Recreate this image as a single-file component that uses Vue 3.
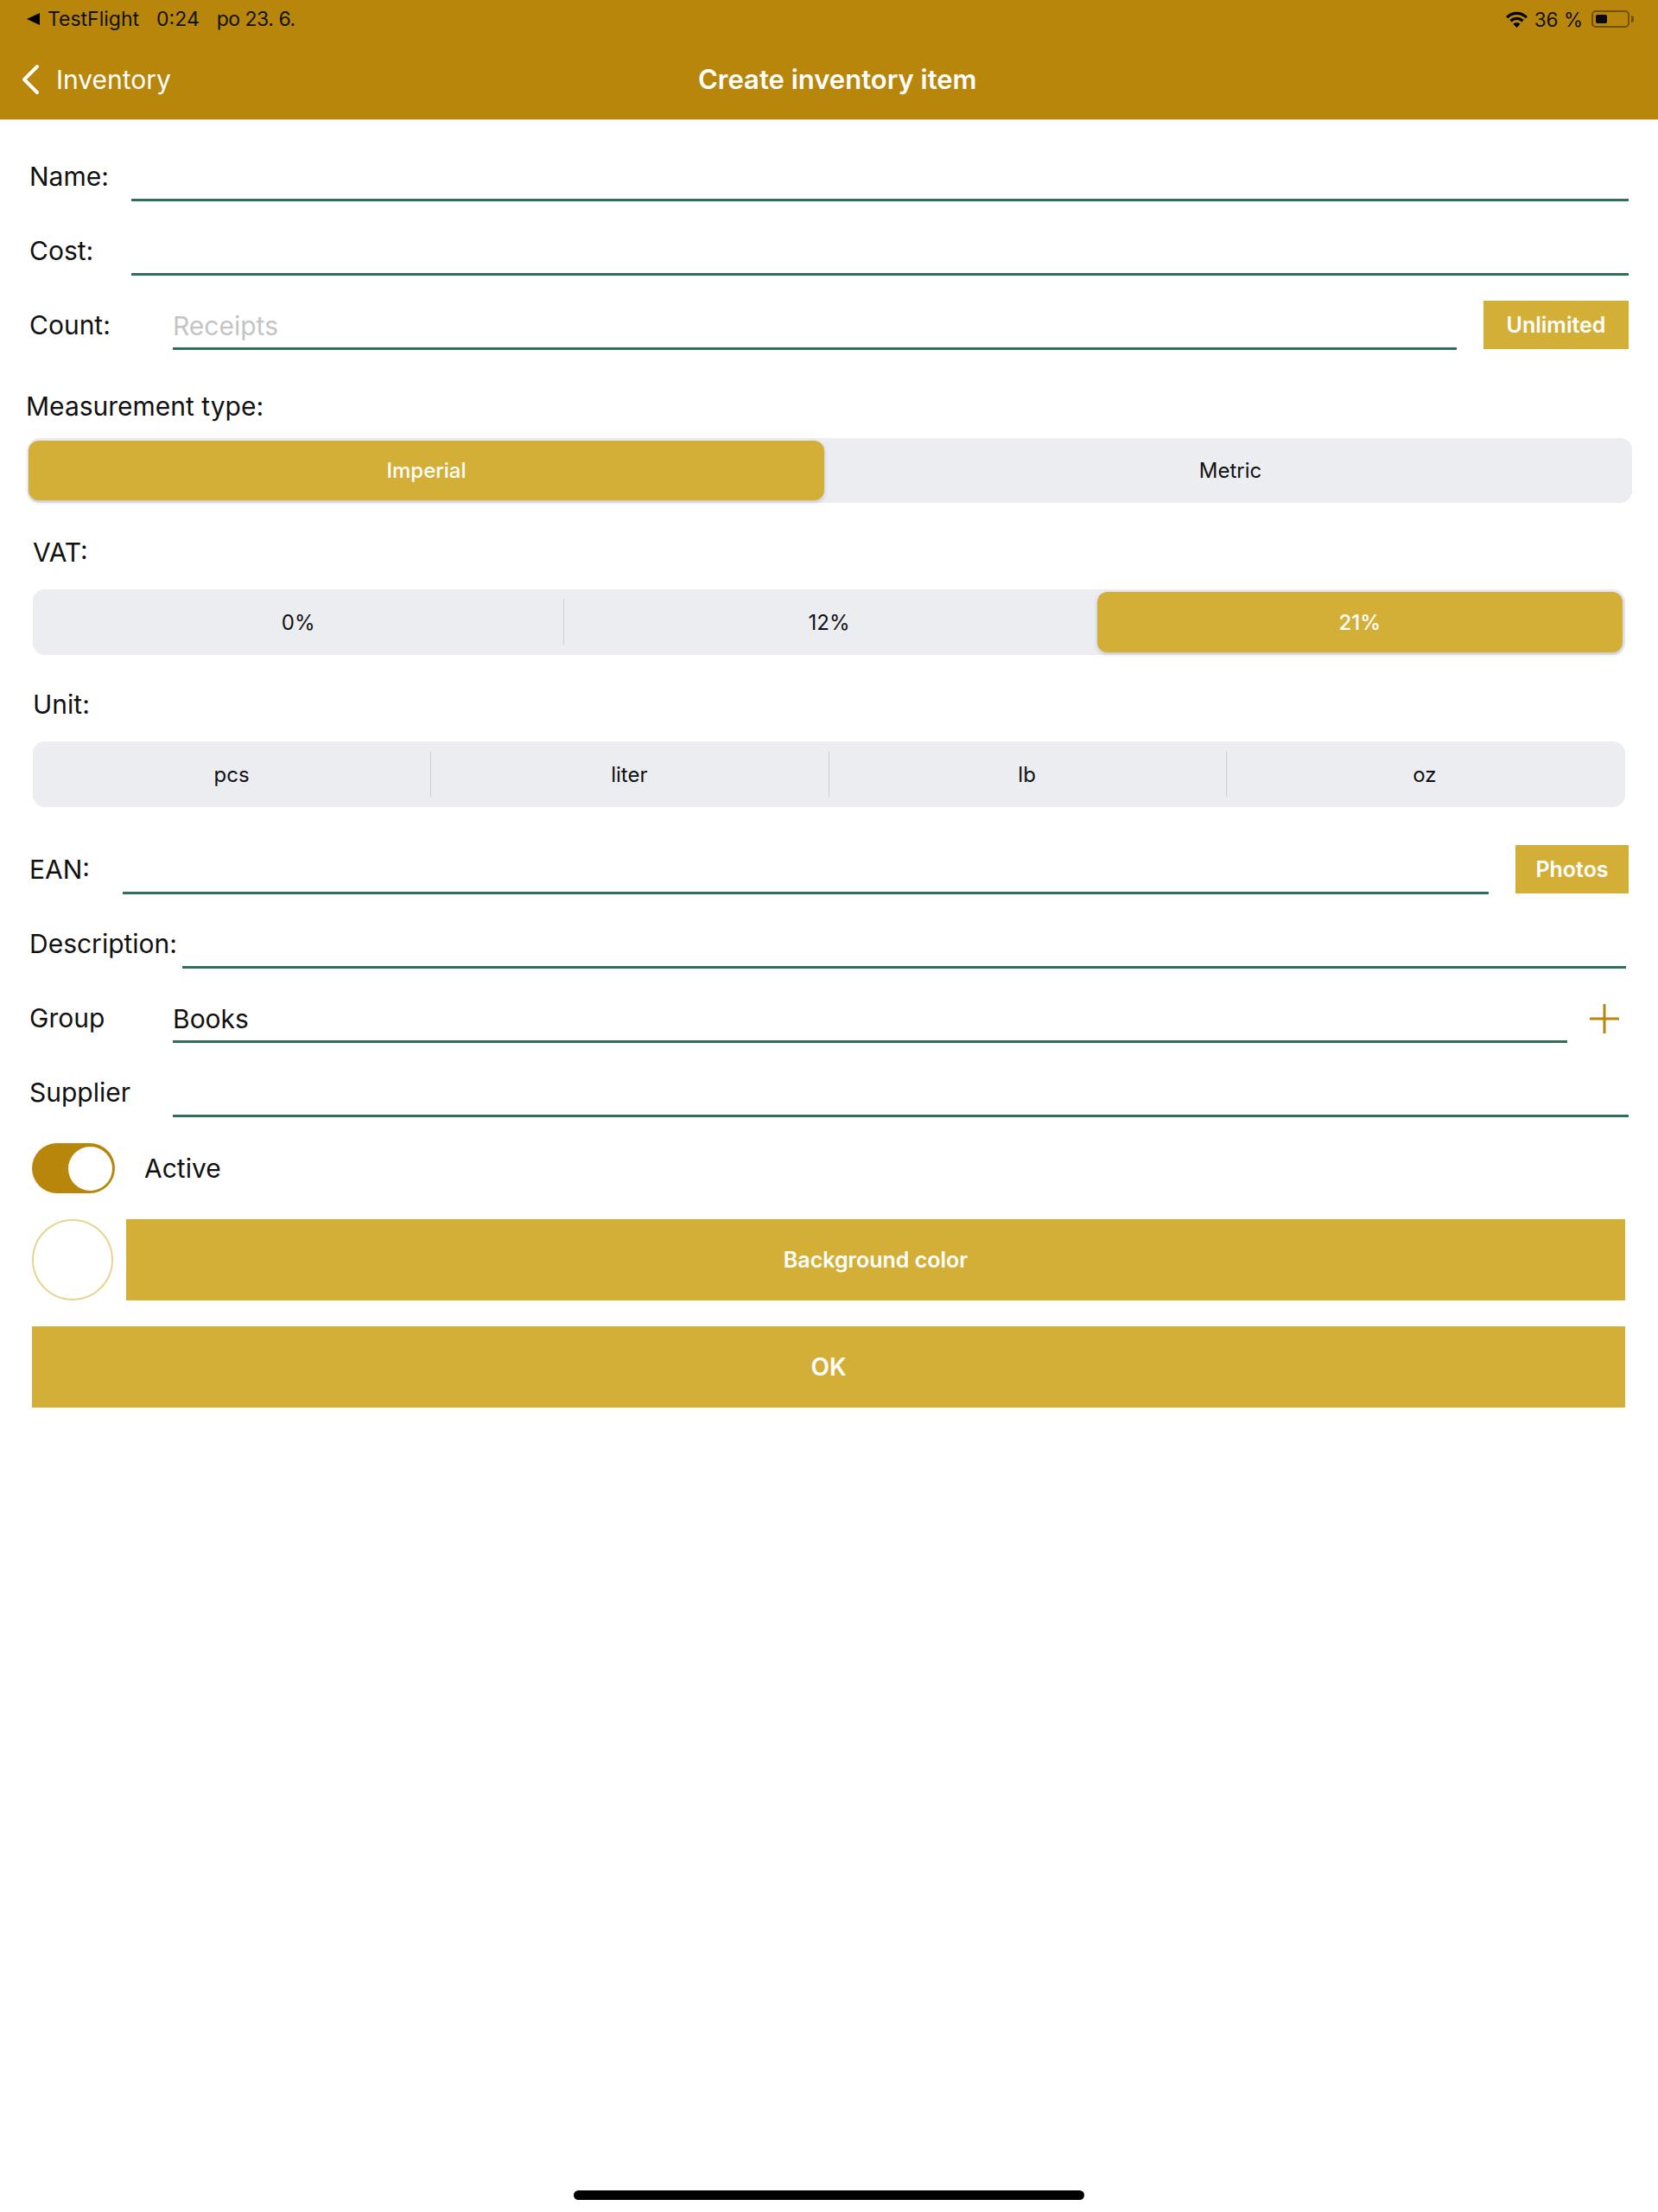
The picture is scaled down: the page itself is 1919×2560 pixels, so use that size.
<template>
  <div class="page">
    <!-- Status + nav bar -->
    <header class="top-bar">
      <div class="status-bar">
        <div class="status-left">
          <svg class="back-arrow" viewBox="0 0 15 14" width="15" height="14"><path d="M0 7 15 0v14z" fill="#000" /></svg>
          <span class="status-app">TestFlight</span>
          <span class="status-time">0:24</span>
          <span class="status-date">po 23. 6.</span>
        </div>
        <div class="status-right">
          <svg class="wifi" viewBox="0 0 26 20" width="25" height="19">
            <path d="M1 7.5C8 .8 18 .8 25 7.5" fill="none" stroke="#000" stroke-width="3.4" />
            <path d="M5.6 11.8c4.4-4 10.4-4 14.8 0" fill="none" stroke="#000" stroke-width="3.4" />
            <path d="M13 20l-4.2-4.6c2.4-2 6-2 8.4 0z" fill="#000" />
          </svg>
          <span class="battery-text">36 %</span>
          <div class="battery"><div class="battery-fill"></div></div>
          <div class="battery-tip"></div>
        </div>
      </div>
      <nav class="nav-bar">
        <div class="nav-back">
          <svg viewBox="0 0 22 36" width="22" height="36"><path d="M19 3 4 18l15 15" fill="none" stroke="#fff" stroke-width="4" stroke-linecap="round" stroke-linejoin="round" /></svg>
          <span>Inventory</span>
        </div>
        <h1 class="nav-title">Create inventory item</h1>
      </nav>
    </header>

    <main class="form">
      <div class="row row-first">
        <label class="row-label label-name">Name:</label>
        <input v-model="form.name" class="row-input" />
      </div>
      <div class="row">
        <label class="row-label label-name">Cost:</label>
        <input v-model="form.cost" class="row-input" />
      </div>
      <div class="row">
        <label class="row-label label-wide">Count:</label>
        <input v-model="form.count" class="row-input" placeholder="Receipts" />
        <button class="small-btn unlimited-btn">Unlimited</button>
      </div>

      <div class="section-label measure-label">Measurement type:</div>
      <div class="segment measure-segment">
        <div v-for="(item, i) in measurementTypes" :key="item" class="segment-item" :class="{ active: form.measurement === i }">
          <span>{{ item }}</span>
        </div>
      </div>

      <div class="section-label">VAT:</div>
      <div class="segment">
        <div
          v-for="(item, i) in vatRates"
          :key="item"
          class="segment-item"
          :class="{ active: form.vat === i, divided: i > 0 && form.vat !== i && form.vat !== i - 1 }"
        >
          <span>{{ item }}</span>
        </div>
      </div>

      <div class="section-label">Unit:</div>
      <div class="segment unit-segment">
        <div v-for="(item, i) in units" :key="item" class="segment-item" :class="{ divided: i > 0 }">
          <span>{{ item }}</span>
        </div>
      </div>

      <div class="row row-ean">
        <label class="row-label label-ean">EAN:</label>
        <input v-model="form.ean" class="row-input" />
        <button class="small-btn photos-btn">Photos</button>
      </div>
      <div class="row row-description">
        <label class="row-label label-description">Description:</label>
        <input v-model="form.description" class="row-input" />
      </div>
      <div class="row">
        <label class="row-label label-wide">Group</label>
        <input v-model="form.group" class="row-input" />
        <svg class="plus" viewBox="0 0 34 34" width="34" height="34">
          <path d="M17 1v32M1 17h32" fill="none" stroke="#b8860b" stroke-width="3" stroke-linecap="round" />
        </svg>
      </div>
      <div class="row">
        <label class="row-label label-wide">Supplier</label>
        <input v-model="form.supplier" class="row-input" />
      </div>

      <div class="active-row">
        <div class="toggle"><div class="toggle-knob"></div></div>
        <span class="active-text">Active</span>
      </div>

      <div class="color-row">
        <div class="color-swatch"></div>
        <button class="wide-btn color-btn">Background color</button>
      </div>
      <button class="wide-btn ok-btn">OK</button>
    </main>

    <div class="home-bar"></div>
  </div>
</template>

<script setup>
import { reactive } from 'vue'

const form = reactive({
  name: '',
  cost: '',
  count: '',
  measurement: 0,
  vat: 2,
  ean: '',
  description: '',
  group: 'Books',
  supplier: ''
})

const measurementTypes = ['Imperial', 'Metric']
const vatRates = ['0%', '12%', '21%']
const units = ['pcs', 'liter', 'lb', 'oz']
</script>

<style>
html,
body {
  margin: 0;
  background: #fff;
}
</style>

<style scoped>
.page {
  position: relative;
  width: 1919px;
  height: 2560px;
  background: #fff;
  font-family: Inter, "Liberation Sans", sans-serif;
  color: #111;
  overflow: hidden;
}

/* Top bar */
.top-bar {
  height: 139px;
  background: #b8860b;
  border-bottom: 1px solid #d8d8d8;
  box-sizing: border-box;
}

.status-bar {
  display: flex;
  align-items: center;
  justify-content: space-between;
  height: 44px;
  padding: 0 28px 0 31px;
  font-size: 23px;
  color: #111;
}

.status-left {
  display: flex;
  align-items: center;
}

.back-arrow {
  margin-right: 9px;
}

.status-time {
  margin-left: 20px;
}

.status-date {
  margin-left: 20px;
  letter-spacing: -0.5px;
}

.status-right {
  display: flex;
  align-items: center;
}

.battery-text {
  margin-left: 8px;
  font-size: 22.5px;
}

.battery {
  width: 44px;
  height: 20px;
  margin-left: 10px;
  padding: 3px;
  box-sizing: border-box;
  border: 2px solid #6f5108;
  border-radius: 5px;
}

.battery-fill {
  width: 13px;
  height: 100%;
  background: #0a0a14;
  border-radius: 2px;
}

.battery-tip {
  width: 3px;
  height: 8px;
  margin-left: 2px;
  background: #6f5108;
  border-radius: 0 3px 3px 0;
}

.nav-bar {
  position: relative;
  display: flex;
  align-items: center;
  height: 94px;
  box-sizing: border-box;
  padding: 2px 0 0 24px;
}

.nav-back {
  display: flex;
  align-items: center;
  color: #fff;
  font-size: 30px;
}

.nav-back span {
  margin-left: 19px;
}

.nav-title {
  position: absolute;
  left: 808px;
  top: 50%;
  transform: translateY(-50%);
  margin: 0;
  color: #fff;
  font-size: 31px;
  font-weight: 600;
  white-space: nowrap;
}

/* Form */
.form {
  display: flex;
  flex-direction: column;
}

.row {
  display: flex;
  align-items: stretch;
  height: 56px;
  margin-top: 30px;
  padding: 0 34px;
}

.row-first {
  margin-top: 38px;
}

.row-ean {
  margin-top: 45px;
}

.row-description {
  padding-right: 37px;
}

.row-label {
  flex: none;
  line-height: 55px;
  font-size: 30px;
}

.label-name {
  width: 118px;
}

.label-wide {
  width: 166px;
}

.label-ean {
  width: 108px;
}

.label-description {
  width: 177px;
}

.row-input {
  flex: 1;
  min-width: 0;
  padding: 2px 0 0;
  border: none;
  border-bottom: 3px solid #2e6f57;
  outline: none;
  background: transparent;
  font: inherit;
  font-size: 30px;
  color: #111;
}

.row-input::placeholder {
  color: #c4c4c6;
}

.small-btn {
  flex: none;
  margin-top: -1px;
  margin-bottom: 1px;
  border: none;
  background: #d4af37;
  color: #fff;
  font-family: inherit;
  font-size: 25px;
  font-weight: 600;
  padding: 0;
}

.unlimited-btn {
  width: 168px;
  margin-left: 31px;
}

.photos-btn {
  width: 131px;
  margin-left: 31px;
}

.plus {
  flex: none;
  align-self: center;
  margin: 0 11px 0 26px;
}

.section-label {
  height: 40px;
  line-height: 41px;
  margin: 37px 0 23px 38px;
  font-size: 30px;
}

.measure-label {
  margin: 45px 0 17px 30px;
}

.segment {
  display: flex;
  height: 76px;
  margin: 0 38px;
  background: #ecedf1;
  border-radius: 14px;
}

.measure-segment {
  height: 75px;
  margin: 0 30px 0 32px;
}

.measure-segment .segment-item:first-child {
  flex: 0 0 921px;
  margin-left: 1px;
}

.measure-segment .segment-item:last-child {
  margin-left: 5px;
}

.unit-segment {
  padding-right: 2px;
}

.segment-item {
  flex: 1;
  position: relative;
  display: flex;
  align-items: center;
  justify-content: center;
  margin: 3px;
  font-size: 24px;
  border-radius: 12px;
}

.segment-item.active {
  background: #d4af37;
  color: #fff;
  font-weight: 500;
  box-shadow: 0 2px 5px rgba(0, 0, 0, 0.18);
}

.segment-item.divided::before {
  content: "";
  position: absolute;
  left: -3px;
  top: 9px;
  bottom: 9px;
  width: 1px;
  background: #cfcfd3;
}

/* Active toggle */
.active-row {
  display: flex;
  align-items: center;
  height: 58px;
  margin: 30px 0 0 37px;
}

.toggle {
  width: 96px;
  height: 58px;
  padding: 4px 3px 3px 0;
  box-sizing: border-box;
  display: flex;
  justify-content: flex-end;
  background: #b8860b;
  border-radius: 29px;
}

.toggle-knob {
  width: 51px;
  height: 51px;
  background: #fff;
  border-radius: 50%;
}

.active-text {
  margin-left: 34px;
  font-size: 30px;
}

/* Buttons */
.color-row {
  display: flex;
  margin: 30px 38px 0 37px;
}

.color-swatch {
  flex: none;
  width: 94px;
  height: 94px;
  box-sizing: border-box;
  border: 2px solid #e8d48e;
  border-radius: 50%;
}

.wide-btn {
  height: 94px;
  padding: 0;
  border: none;
  background: #d4af37;
  color: #fff;
  font-family: inherit;
  font-size: 25px;
  font-weight: 600;
}

.color-btn {
  flex: 1;
  margin-left: 15px;
}

.ok-btn {
  margin: 30px 38px 0 37px;
  font-size: 28px;
}

.home-bar {
  position: absolute;
  left: 664px;
  bottom: 14px;
  width: 591px;
  height: 11px;
  background: #000;
  border-radius: 6px;
}
</style>
